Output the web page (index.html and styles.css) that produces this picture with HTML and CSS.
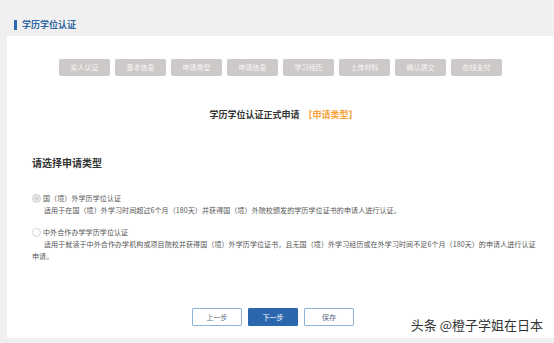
FILE: index.html
```html
<!DOCTYPE html>
<html lang="zh-CN">
<head>
<meta charset="utf-8">
<title>学历学位认证</title>
<link rel="stylesheet" href="styles.css">
</head>
<body>
<div class="header"><span class="bar"></span><span class="header-title">学历学位认证</span></div>
<div class="card">
  <div class="steps">
    <div class="step">实人认证</div>
    <div class="step">基本信息</div>
    <div class="step">申请类型</div>
    <div class="step">申请信息</div>
    <div class="step">学习经历</div>
    <div class="step">上传材料</div>
    <div class="step">确认提交</div>
    <div class="step">在线支付</div>
  </div>
  <div class="page-title">学历学位认证正式申请 <span class="accent">【申请类型】</span></div>
  <div class="section">
    <div class="section-title">请选择申请类型</div>
    <div class="option first">
      <div class="opt-label"><span class="radio checked"></span>国（境）外学历学位认证</div>
      <div class="opt-desc">适用于在国（境）外学习时间超过6个月（180天）并获得国（境）外院校颁发的学历学位证书的申请人进行认证。</div>
    </div>
    <div class="option">
      <div class="opt-label"><span class="radio"></span>中外合作办学学历学位认证</div>
      <div class="opt-desc">适用于就读于中外合作办学机构或项目院校并获得国（境）外学历学位证书，且无国（境）外学习经历或在外学习时间不足6个月（180天）的申请人进行认证申请。</div>
    </div>
  </div>
  <div class="actions">
    <div class="btn">上一步</div>
    <div class="btn primary">下一步</div>
    <div class="btn">保存</div>
  </div>
  <div class="watermark">头条 @橙子学姐在日本</div>
</div>
</body>
</html>
```
FILE: styles.css
```css
html, body {
  margin: 0;
  padding: 0;
}
body {
  background: #f0f0f0;
  font-family: "Noto Sans CJK SC", "Noto Sans", sans-serif;
  color: #333;
  width: 554px;
  height: 343px;
  overflow: hidden;
}
.header {
  height: 36px;
  box-sizing: border-box;
  padding: 19px 0 0 14px;
  display: flex;
  align-items: flex-start;
}
.bar {
  width: 3px;
  height: 10px;
  background: #2a6ab0;
  margin-right: 5px;
  margin-top: 1px;
}
.header-title {
  font-size: 9px;
  line-height: 11px;
  font-weight: 700;
  color: #2e65a3;
}
.card {
  position: relative;
  margin-left: 7px;
  height: 302px;
  background: #fff;
  box-sizing: border-box;
  padding-top: 23px;
}
.steps {
  display: flex;
  justify-content: center;
  gap: 5px;
}
.step {
  width: 51px;
  height: 17px;
  background: #cdc9c8;
  border-radius: 2px;
  color: #f7f6f6;
  font-size: 7px;
  line-height: 17px;
  text-align: center;
}
.page-title {
  margin-top: 33px;
  text-align: center;
  font-size: 9px;
  line-height: 12px;
  font-weight: 700;
  color: #333;
  padding-left: 6px;
}
.accent {
  color: #f5a23a;
  margin-left: 2px;
}
.section {
  padding: 0 14px 0 25px;
}
.section-title {
  margin-top: 35px;
  font-size: 10px;
  line-height: 14px;
  font-weight: 700;
  color: #333;
}
.option {
  margin-top: 10px;
}
.option.first {
  margin-top: 22px;
}
.opt-label {
  display: flex;
  align-items: center;
  font-size: 7px;
  line-height: 12px;
  color: #555;
  letter-spacing: 0.1px;
}
.radio {
  width: 7px;
  height: 7px;
  border: 1px solid #d6d6d6;
  border-radius: 50%;
  background: #fff;
  margin-right: 2px;
  box-sizing: content-box;
}
.radio.checked {
  background: radial-gradient(circle, #d4d4d4 0 35%, #e8e8e8 45%);
  border-color: #d0d0d0;
}
.opt-desc {
  font-size: 7px;
  line-height: 12px;
  color: #555;
  text-indent: 12px;
  letter-spacing: 0.1px;
}
.actions {
  margin-top: 46px;
  display: flex;
  justify-content: center;
  gap: 6px;
  padding-right: 15px;
}
.btn {
  width: 50px;
  height: 18px;
  box-sizing: border-box;
  border: 1px solid #8fb1da;
  border-radius: 1px;
  background: #fff;
  color: #5a6a80;
  font-size: 7px;
  line-height: 16px;
  text-align: center;
}
.btn.primary {
  background: #2a67ad;
  border-color: #2a67ad;
  color: #fff;
}
.watermark {
  position: absolute;
  right: 11px;
  top: 281px;
  font-size: 13px;
  line-height: 16px;
  color: #333;
  text-shadow: 0 0 2px #fff;
}
```
